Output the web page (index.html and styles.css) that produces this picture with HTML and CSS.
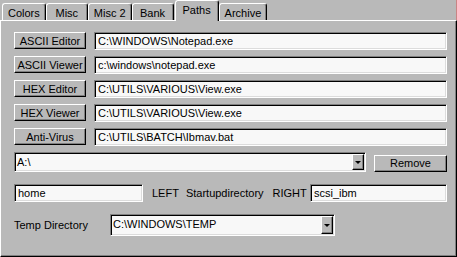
FILE: index.html
```html
<!doctype html>
<html lang="en">
  <head>
    <meta charset="utf-8" />
    <title>Paths</title>
    <link rel="stylesheet" href="styles.css">
  </head>
  <body>
    <div class="tabs">
      <div class="tab">Colors</div>
      <div class="tab">Misc</div>
      <div class="tab">Misc 2</div>
      <div class="tab">Bank</div>
      <div class="tab selected">Paths</div>
      <div class="tab">Archive</div>
    </div>

    <div class="panel">
      <!-- program paths -->
      <div class="path-row">
        <button class="btn path-btn">ASCII Editor</button>
        <div class="field">C:\WINDOWS\Notepad.exe</div>
      </div>
      <div class="path-row">
        <button class="btn path-btn">ASCII Viewer</button>
        <div class="field">c:\windows\notepad.exe</div>
      </div>
      <div class="path-row">
        <button class="btn path-btn">HEX Editor</button>
        <div class="field">C:\UTILS\VARIOUS\View.exe</div>
      </div>
      <div class="path-row">
        <button class="btn path-btn">HEX Viewer</button>
        <div class="field">C:\UTILS\VARIOUS\View.exe</div>
      </div>
      <div class="path-row">
        <button class="btn path-btn">Anti-Virus</button>
        <div class="field">C:\UTILS\BATCH\Ibmav.bat</div>
      </div>

      <div class="drive-row">
        <div class="combo drive-combo">
          <span class="combo-text">A:\</span>
          <span class="combo-arrow"></span>
        </div>
        <button class="btn remove-btn">Remove</button>
      </div>

      <div class="startup-row">
        <div class="field startup-field">home</div>
        <span class="label left-label">LEFT</span>
        <span class="label startup-label">Startupdirectory</span>
        <span class="label right-label">RIGHT</span>
        <div class="field startup-field right-field">scsi_ibm</div>
      </div>

      <div class="temp-row">
        <span class="label temp-label">Temp Directory</span>
        <div class="combo temp-combo">
          <span class="combo-text">C:\WINDOWS\TEMP</span>
          <span class="combo-arrow"></span>
        </div>
      </div>
    </div>
  </body>
</html>
```

FILE: styles.css
```css
* {
  box-sizing: border-box;
}

html,
body {
  width: 457px;
  height: 257px;
  overflow: hidden;
}

body {
  margin: 0;
  background: #b9b9b9;
  color: #000;
  font-family: 'Liberation Sans', Arial, sans-serif;
  font-size: 11px;
}

/* tab strip */

.tabs {
  display: flex;
  align-items: flex-end;
  height: 20px;
  padding-left: 2px;
  border-right: 1px solid #c88484;
}

.tab {
  min-width: 42px;
  height: 17px;
  padding: 3px 5px 0;
  text-align: center;
  border-top: 1px solid #fff;
  border-left: 1px solid #fff;
  border-right: 1px solid #000;
  border-radius: 3px 3px 0 0;
  box-shadow: inset -1px 0 #808080;
  line-height: 12px;
}

.tab.selected {
  position: relative;
  z-index: 1;
  height: 21px;
  min-width: 44px;
  margin: 0 0 -1px 1px;
  padding-top: 3px;
  background: #b9b9b9;
}

.tab.selected + .tab {
  min-width: 47px;
}

/* panel */

.panel {
  height: 237px;
  padding: 11px 9px 0 13px;
  border-top: 1px solid #fff;
  border-left: 1px solid #fff;
  border-right: 1px solid #000;
  border-bottom: 1px solid #000;
  box-shadow: inset -1px -1px #808080;
}

.btn {
  height: 17px;
  padding: 0;
  background: #b9b9b9;
  color: #000;
  font-family: inherit;
  font-size: 11px;
  border: 1px solid;
  border-color: #fff #000 #000 #fff;
  box-shadow: inset -1px -1px #808080;
}

.field {
  height: 18px;
  padding: 0 3px;
  background: #f8f8f8;
  border: 1px solid;
  border-color: #808080 #fff #fff #808080;
  box-shadow: inset 1px 1px #000, inset -1px -1px #dcdcdc;
  line-height: 16px;
  white-space: nowrap;
  overflow: hidden;
}

.path-row {
  display: flex;
  gap: 8px;
  margin-bottom: 6px;
}

.path-btn {
  width: 72px;
}

.path-row .field {
  flex: 1;
}

/* combo boxes */

.combo {
  display: flex;
  align-items: stretch;
  padding: 1px;
  background: #f8f8f8;
  border: 1px solid;
  border-color: #808080 #fff #fff #808080;
  box-shadow: inset 1px 1px #000, inset -1px -1px #dcdcdc;
}

.combo-text {
  flex: 1;
  padding-left: 1px;
  line-height: 16px;
}

.combo-arrow {
  width: 12px;
  display: flex;
  align-items: center;
  justify-content: center;
  background: #b9b9b9;
  border: 1px solid;
  border-color: #fff #000 #000 #fff;
  box-shadow: inset -1px -1px #808080;
}

.combo-arrow::after {
  content: '';
  border-left: 3px solid transparent;
  border-right: 3px solid transparent;
  border-top: 3px solid #000;
}

.drive-row {
  display: flex;
  align-items: center;
  gap: 8px;
}

.drive-combo {
  width: 352px;
  height: 20px;
}

.remove-btn {
  width: 73px;
  margin-top: 2px;
}

.startup-row {
  display: flex;
  align-items: center;
  margin-top: 12px;
}

.startup-field {
  width: 129px;
}

.left-label {
  margin-left: 9px;
}

.startup-label {
  margin-left: 7px;
}

.right-label {
  margin-left: 9px;
}

.right-field {
  width: 137px;
  margin-left: auto;
}

.temp-row {
  display: flex;
  align-items: center;
  margin-top: 12px;
}

.temp-label {
  width: 96px;
}

.temp-combo {
  width: 225px;
  height: 22px;
}
```
